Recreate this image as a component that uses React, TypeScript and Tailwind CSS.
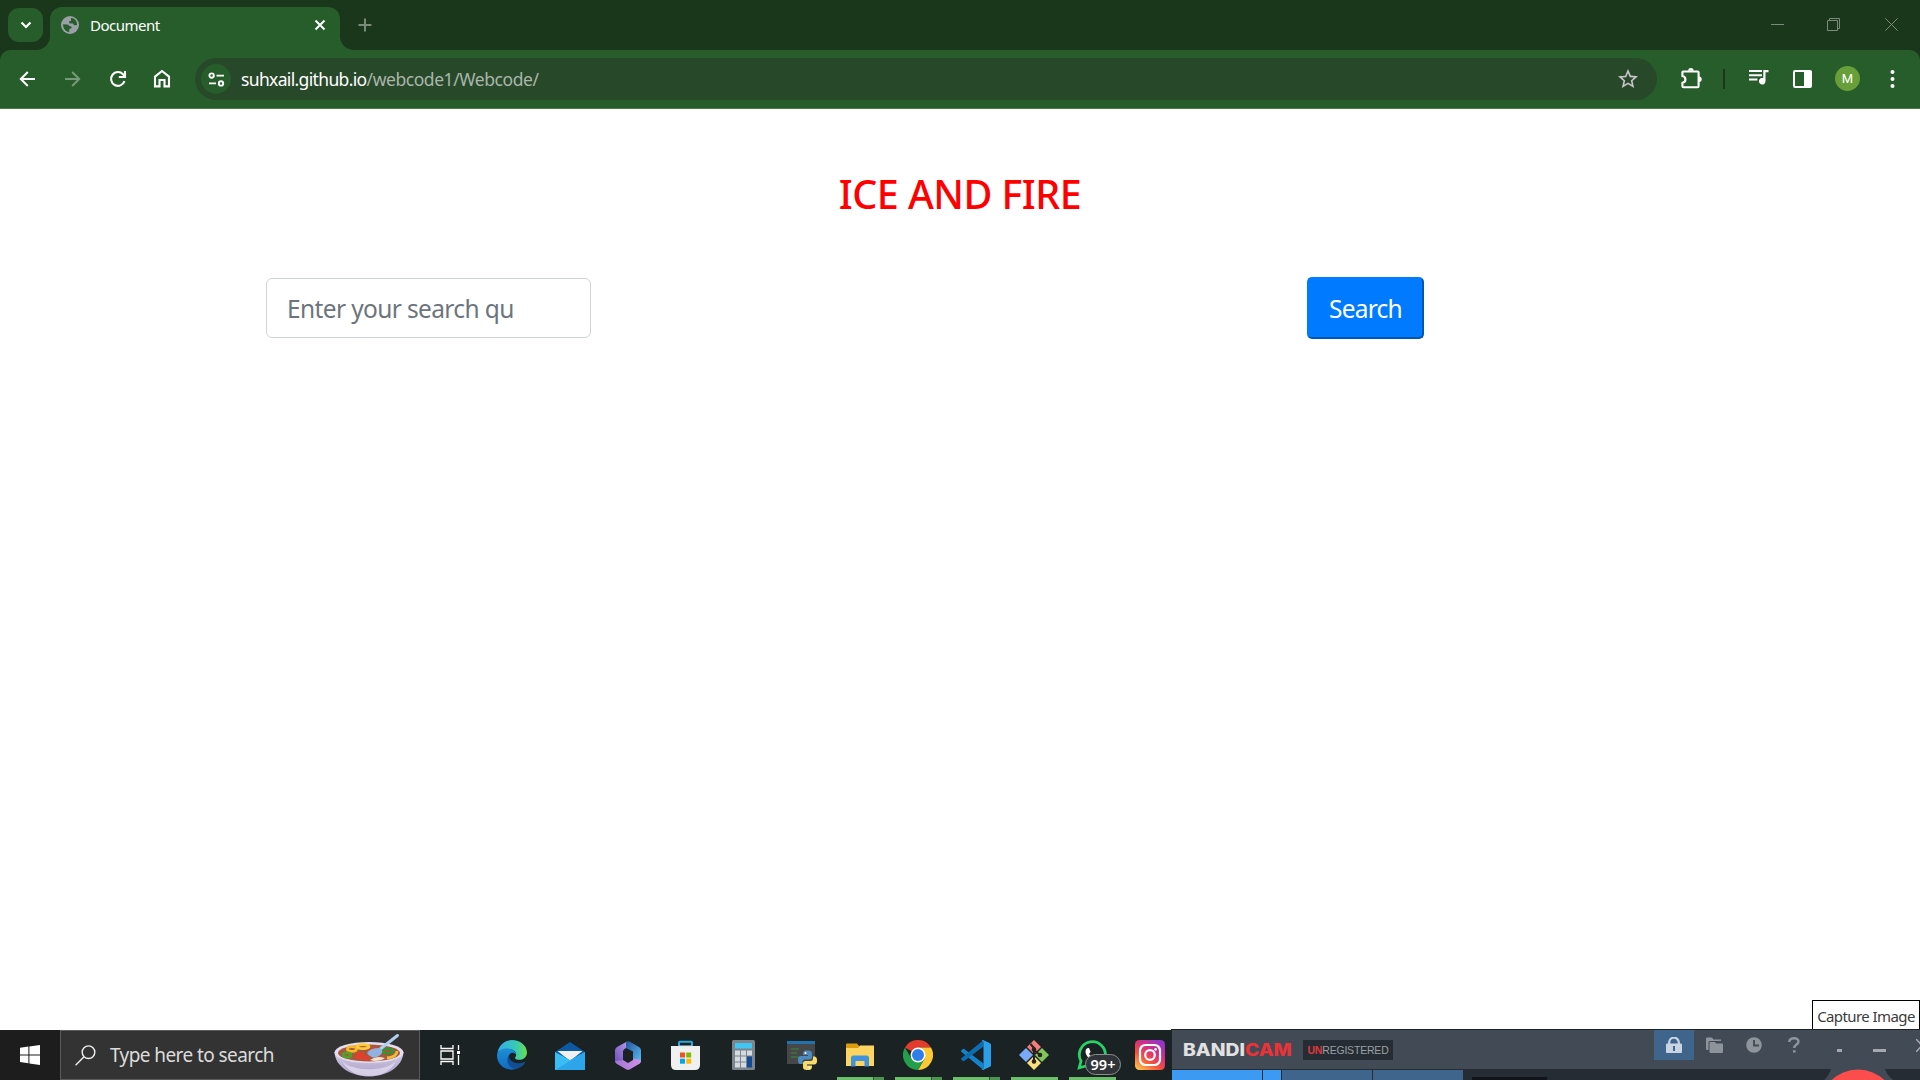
import React from "react";

function Globe() {
  return (
    <svg width="18" height="18" viewBox="0 0 18 18">
      <circle cx="9" cy="9" r="9" fill="#9aa0a6" />
      <path d="M10 2 C14 2 16.3 5.5 16 9 L13.5 9.2 C12.5 9.2 12.7 7.6 11.5 7.4 L8.2 7.2 L8.2 5.2 L10 5 Z" fill="#275d2b" />
      <path d="M2 8.2 L6 8.4 C8 8.6 8 10 9.4 10.2 C11.2 10.4 11 12.4 9.6 12.6 L8.4 13 L8.2 16 C4.5 15.6 2 12.5 2 8.2 Z" fill="#275d2b" />
    </svg>
  );
}

function TabStrip() {
  return (
    <div className="flex h-[50px] items-start bg-[#1b371b]">
      <div className="ml-2 mt-2 flex h-[34px] w-[35px] items-center justify-center rounded-[11px] bg-[#275d2b]">
        <svg width="12" height="8" viewBox="0 0 12 8" fill="none" stroke="#fff" strokeWidth="2.2"><path d="M1.5 1.5 6 6 10.5 1.5" /></svg>
      </div>
      <svg className="-ml-[7px] mt-[36px] shrink-0" width="14" height="14"><path d="M0 14 A14 14 0 0 0 14 0 V14Z" fill="#275d2b" /></svg>
      <div className="mt-[7px] flex h-[43px] w-[290px] items-center rounded-t-[12px] bg-[#275d2b] pl-[11px] pr-[14px] pb-[7px]">
        <Globe />
        <span className="ml-[11px] text-[15px] leading-5 tracking-[-0.5px] text-white">Document</span>
        <svg className="ml-auto" width="12" height="12" viewBox="0 0 12 12" stroke="#fff" strokeWidth="2"><path d="M1.5 1.5 10.5 10.5M10.5 1.5 1.5 10.5" /></svg>
      </div>
      <svg className="mt-[36px] shrink-0" width="14" height="14"><path d="M14 14 A14 14 0 0 1 0 0 V14Z" fill="#275d2b" /></svg>
      <svg className="ml-[4px] mt-[18px]" width="14" height="14" viewBox="0 0 14 14" stroke="#788b76" strokeWidth="2"><path d="M7 .5V13.5M.5 7H13.5" /></svg>
      <div className="ml-auto mr-[22px] mt-[18px] flex">
        <svg width="13" height="13" stroke="#7b8b7a"><path d="M0 6.5H13" /></svg>
        <svg className="ml-[43px]" width="13" height="13" fill="none" stroke="#7b8b7a"><path d="M.5 2.5H10.5V12.5H.5ZM2.5 2.5V.5H12.5V10.5H10.5" /></svg>
        <svg className="ml-[45px]" width="13" height="13" stroke="#7b8b7a"><path d="M.3 .3 12.7 12.7M12.7 .3 .3 12.7" /></svg>
      </div>
    </div>
  );
}

function Toolbar() {
  return (
    <div className="bg-[#1b371b]">
      <div className="flex h-[59px] items-center rounded-t-[10px] border-b border-[#4b7c4e] bg-[#275d2b]">
        <svg className="ml-[19px]" width="17" height="16" viewBox="0 0 17 16" fill="none" stroke="#fff" strokeWidth="2"><path d="M16 8H2M8.8 1 1.8 8 8.8 15" /></svg>
        <svg className="ml-[28px]" width="17" height="16" viewBox="0 0 17 16" fill="none" stroke="#789a79" strokeWidth="2"><path d="M1 8H15M8.2 1 15.2 8 8.2 15" /></svg>
        <svg className="ml-[28px]" width="18" height="18" viewBox="0 0 18 18" fill="none" stroke="#fff" strokeWidth="2.1"><path d="M15.5 11.2 A6.9 6.9 0 1 1 14 4.2 L16 6.2M16 1V7H9.8" /></svg>
        <svg className="-mt-[2px] ml-[26px]" width="18" height="19" viewBox="0 0 18 19" fill="none" stroke="#fff" strokeWidth="2.1"><path d="M2 7.6 9 2 16 7.6V17.4H11.5V11H6.5V17.4H2Z" /></svg>
        <div className="ml-[24px] flex h-[42px] w-[1462px] items-center rounded-full bg-[#28482a] pl-[6px] pr-[17px]">
          <div className="flex h-[30px] w-[30px] items-center justify-center rounded-full bg-[#275d2b]">
            <svg width="17" height="15" viewBox="0 0 17 15" fill="none" stroke="#fff" strokeWidth="1.9"><circle cx="3.6" cy="3.6" r="2.2" /><path d="M8.5 3.6H16M1 11.4H8" /><circle cx="13" cy="11.4" r="2.2" /></svg>
          </div>
          <div className="ml-[10px] text-[17.5px] leading-6 whitespace-nowrap">
            <span className="tracking-[-0.65px] text-white">suhxail.github.io</span><span className="tracking-[-0.43px] text-[#a9b6aa]">/webcode1/Webcode/</span>
          </div>
          <svg className="ml-auto" width="24" height="24" viewBox="0 0 24 24" fill="#c9c6ca"><path d="M22 9.24l-7.19-.62L12 2 9.19 8.63 2 9.24l5.46 4.73L5.82 21 12 17.27 18.18 21l-1.63-7.03L22 9.24zM12 15.4l-3.76 2.27 1-4.28-3.32-2.88 4.38-.38L12 6.1l1.71 4.04 4.38.38-3.32 2.88 1 4.28L12 15.4z" /></svg>
        </div>
        <svg className="-mt-[2px] ml-[23px]" width="23" height="23" viewBox="0 0 23 23" fill="none" stroke="#fff" strokeWidth="2.1"><path d="M3 4.5H17.5Q18.6 4.5 18.6 5.6V19Q18.6 20.2 17.5 20.2H3.6Q2.4 20.2 2.4 19V15.8C6.4 15 6.4 9.8 2.4 9V5.4Q2.4 4.500 3 4.500Z" /><path d="M8.2 3.8a2.7 2.7 0 0 1 5.4 0ZM19 9.5a2.7 2.7 0 0 1 0 5.4Z" fill="#fff" stroke="none" /></svg>
        <div className="ml-[20px] h-[20px] w-[2px] bg-[#1b371b]" />
        <svg className="-mt-[3px] ml-[23px]" width="22" height="17" viewBox="0 0 22 17" fill="#fff"><path d="M1 1H14V3H1ZM1 5.2H14V7.2H1ZM1 9.4H9.4V11.4H1ZM15.3 1H20.5V3.2H17.5V12.2A3.3 3.3 0 1 1 15.3 9.1Z" /></svg>
        <svg className="ml-[23px]" width="19" height="18" viewBox="0 0 19 18"><rect x="1" y="1" width="17" height="16" rx="1" fill="none" stroke="#fff" strokeWidth="2" /><path d="M11 1H18V17H11Z" fill="#fff" /></svg>
        <div className="-mt-px ml-[23px] flex h-[25px] w-[25px] items-center justify-center rounded-full bg-[#689f38] font-[Roboto,sans-serif] text-[13px] text-white">M</div>
        <svg className="ml-[30px]" width="5" height="18" fill="#fff"><circle cx="2.5" cy="2" r="2" /><circle cx="2.5" cy="9" r="2" /><circle cx="2.5" cy="16" r="2" /></svg>
      </div>
    </div>
  );
}

function Bowl() {
  return (
    <svg width="70" height="45" viewBox="0 0 70 45">
      <defs>
        <linearGradient id="bowl" x1="0" x2="0" y1="0" y2="1"><stop offset="0" stopColor="#d3cbe6" /><stop offset="1" stopColor="#aaa0c6" /></linearGradient>
      </defs>
      <path d="M.5 19C1 34 18 43.500 35 43.500S69 34 69.500 19Z" fill="url(#bowl)" />
      <path d="M8 28C16 38 50 40 62 28C56 40 46 43 35 43S14 39 8 28Z" fill="#e9e5f4" opacity=".65" />
      <ellipse cx="35" cy="19.5" rx="34.5" ry="10.5" fill="#e4def3" />
      <ellipse cx="35" cy="20" rx="31" ry="8.500" fill="#a5583b" />
      <g fill="none" strokeWidth="2.800">
        <ellipse cx="18" cy="16" rx="4.500" ry="2.400" stroke="#f5b829" />
        <ellipse cx="29" cy="13.600" rx="6" ry="2" stroke="#ffca38" />
        <ellipse cx="13" cy="22" rx="4" ry="2.200" stroke="#54a02a" />
        <ellipse cx="54" cy="18" rx="5" ry="2.400" stroke="#3d9031" />
        <path d="M53 25Q63 24 63 18" stroke="#f3ba35" />
      </g>
      <path d="M24 19l6 1 2 4-6 3-6-3ZM38 14l6 1-2 4-7-1ZM31 23l5 1-1 4-6-1Z" fill="#e2402d" />
      <path d="M36 27Q42 22 51 25Q48 28 40 28Z" fill="#f5dfca" />
      <path d="M45 17 63.500 2.500" stroke="#b3cef0" strokeWidth="3" strokeLinecap="round" />
      <path d="M33 20Q36 15 46 15Q51 19 45 23Q38 27 33 20Z" fill="#8fb2e0" />
    </svg>
  );
}

function EdgeIcon() {
  return (
    <svg width="30" height="30" viewBox="0 0 30 30">
      <defs>
        <linearGradient id="eg" x1="0" x2="1"><stop offset="0" stopColor="#35a9e8" /><stop offset=".6" stopColor="#35c9b9" /><stop offset="1" stopColor="#6ddc4e" /></linearGradient>
        <linearGradient id="eb" x1="0" x2="0" y1="0" y2="1"><stop offset="0" stopColor="#1b8fd8" /><stop offset="1" stopColor="#126bc0" /></linearGradient>
      </defs>
      <path d="M.5 13C1.500 5 8 0 15 0C23 0 30 5.500 30 12.500C30 17 26.500 19.800 22.500 19.800C18.500 19.800 17.500 18.200 18.300 17.200C21 13.500 17 9 11.500 9C6 9 1.500 11 .5 13Z" fill="url(#eg)" />
      <path d="M0 15C.5 10 5 8.500 10 8.500C15.500 8.500 19 12 19 14.500C16 11 12 13 11.500 17C11 23 16 29 21 28.500C12 32 0 27.500 0 15Z" fill="url(#eb)" />
      <path d="M12 15C7 22 14 31 21.500 28.300C25 27 27 24.500 28 22.800C28.300 22 27.800 21.500 27 22C20 25.500 11.500 21.500 12 15Z" fill="#134e93" />
    </svg>
  );
}

function MailIcon() {
  return (
    <svg width="30" height="29" viewBox="0 0 30 29">
      <path d="M0 11 15 1 30 11V16H0Z" fill="#0c59a4" />
      <path d="M2.500 10H27.500L15 20Z" fill="#f1f1f3" />
      <path d="M0 11 15 19 30 11V29H0Z" fill="#38bdf5" /><path d="M30 11 0 29H30Z" fill="#2ca5ea" />
    </svg>
  );
}

function OfficeIcon() {
  return (
    <svg width="26" height="29" viewBox="0 0 26 29">
      <defs>
        <linearGradient id="o1" x1="0" y1="1" x2="1" y2="0"><stop offset="0" stopColor="#6e50bd" /><stop offset="1" stopColor="#bda0ee" /></linearGradient>
        <linearGradient id="o2" x1="0" y1="0" x2="1" y2="1"><stop offset="0" stopColor="#2553a0" /><stop offset="1" stopColor="#5cc3f2" /></linearGradient>
        <linearGradient id="o3" x1="0" x2="1"><stop offset="0" stopColor="#a175d6" /><stop offset="1" stopColor="#d191e6" /></linearGradient>
      </defs>
      <path d="M12 .5 2 6Q0 7.300 0 9V21L8 19V10.500Q8 9 9.500 8L15 4.500Z" fill="url(#o1)" />
      <path d="M11 1Q13-.5 15 .8L24 6Q26 7.300 26 9V20Q26 22 24 23L18 19V10.500L11 7Z" fill="url(#o2)" />
      <path d="M0 20Q0 22 2 23L11 28.200Q13 29.300 15 28.200L24 23Q26 21.800 26 19L18 17.500V19L13 22 8 19Z" fill="url(#o3)" />
    </svg>
  );
}

function StoreIcon() {
  return (
    <svg width="30" height="30" viewBox="0 0 30 30">
      <path d="M8 8V2.500Q8 1.800 8.800 1.800H20.200Q21 1.800 21 2.500V8" fill="none" stroke="#29a9e0" strokeWidth="2" />
      <path d="M0 6H29V25Q29 30 24 30H5Q0 30 0 25Z" fill="#f0f0f0" />
      <path d="M8 6H21" stroke="#c5e6f4" strokeWidth="1" />
      <path d="M9 12.500H14V17.500H9Z" fill="#f25022" /><path d="M15.200 12.500H20.200V17.500H15.200Z" fill="#7fba00" /><path d="M9 18.700H14V23.700H9Z" fill="#00a4ef" /><path d="M15.200 18.700H20.200V23.700H15.200Z" fill="#ffb900" />
    </svg>
  );
}

function CalcIcon() {
  return (
    <svg width="24" height="30" viewBox="0 0 24 30">
      <rect width="23" height="30" rx="1.500" fill="#7c848c" />
      <path d="M3 3H20V8.500H3Z" fill="#3fc6f5" />
      <path d="M3 10.500H8V15.500H3ZM9 10.500H14V15.500H9ZM15 10.500H20V15.500H15ZM3 16.500H8V21.500H3ZM9 16.500H14V21.500H9ZM3 22.500H8V27.500H3ZM9 22.500H14V27.500H9Z" fill="#d4dae0" />
      <path d="M15 16.500H20V27.500H15Z" fill="#124a95" />
    </svg>
  );
}

function PythonIcon() {
  return (
    <svg width="30" height="30" viewBox="0 0 30 30">
      <path d="M0 1H28V24H0Z" fill="#454748" /><path d="M0 1H28V4H0Z" fill="#2272b0" />
      <path d="M4 9H12M4 13H10M4 17H12" stroke="#3a8a41" strokeWidth="1" />
      <path d="M20 10.500C16 10.500 16 12.500 16 15H21V16H13.500C10 16 10 24 13.500 24H15.500V21.500Q15.500 19.500 17.500 19.500H22.500Q25 19.500 25 17V13.500C25 10.500 22 10.500 20 10.500Z" fill="#4b8bc0" />
      <path d="M21 30C25 30 25 28 25 25.500H20V24.500H27.500C31 24.500 31 16.500 27.500 16.500H26V19Q26 21 23.500 21H18.500Q16 21 16 23.500V27C16 30 19 30 21 30Z" fill="#f8dc6a" />
      <circle cx="18.500" cy="13" r="1" fill="#fff" /><circle cx="22.500" cy="27.500" r="1" fill="#fff" />
    </svg>
  );
}

function ExplorerIcon() {
  return (
    <svg width="28" height="24" viewBox="0 0 28 24">
      <path d="M0 1.500Q0 .5 1 .5H11L13.500 3.500V6H0Z" fill="#dd9a0c" />
      <path d="M0 5H12L14 2.500H28V23H0Z" fill="#fcd462" />
      <path d="M5 23.500V15Q5 12.500 7.500 12.500H20.500Q23 12.500 23 15V23.500H18.500V18H9.500V23.500Z" fill="#3f93dc" />
    </svg>
  );
}

function ChromeIcon() {
  return (
    <svg width="30" height="30" viewBox="0 0 30 30">
      <path d="M15 15 2 7.500A15 15 0 0 1 28 7.500H15Z" fill="#e33b2e" />
      <path d="M15 7.500H28A15 15 0 0 1 15 30L21.500 18.750Z" fill="#fcc934" />
      <path d="M2 7.500A15 15 0 0 0 15 30L21.500 18.750 15 15 8.500 18.750Z" fill="#249e4a" />
      <circle cx="15" cy="15" r="7.500" fill="#fff" /><circle cx="15" cy="15" r="6" fill="#2f7de9" />
    </svg>
  );
}

function CodeIcon() {
  return (
    <svg width="30" height="30" viewBox="0 0 30 30">
      <path d="M.3 11.800Q-.3 11 .5 10.300L2 9Q2.600 8.600 3.200 9L22.500 23.500V30Z" fill="#1583cc" />
      <path d="M.3 18.200Q-.3 19 .5 19.700L2 21Q2.600 21.400 3.200 21L22.500 6.500V0Z" fill="#0e6cb0" />
      <path d="M22 0 29 3.200Q30 3.700 30 4.800V25.200Q30 26.300 29 26.800L22 30Q21 30 20.500 29.300Q22.500 29.600 22.500 27.500V2.500Q22.500 .4 20.500 .7Q21 0 22 0Z" fill="#2ba0ea" />
    </svg>
  );
}

function GitIcon() {
  return (
    <svg width="30" height="30" viewBox="0 0 30 30">
      <path d="M15 0 22 7 15 14 8 7Z" fill="#f27d7c" /><path d="M7 8 14 15 7 22 0 15Z" fill="#7ba9f5" /><path d="M23 8 30 15 23 22 16 15Z" fill="#80c75a" /><path d="M15 16 22 23 15 30 8 23Z" fill="#fbe07e" />
      <path d="M11.500 4 15 8V23M15 10 21 15" fill="none" stroke="#27211f" strokeWidth="2" />
      <circle cx="15" cy="9.500" r="2.300" fill="#27211f" /><circle cx="21" cy="15" r="2.300" fill="#27211f" /><circle cx="15" cy="21.500" r="2.300" fill="#27211f" />
    </svg>
  );
}

function WhatsAppIcon() {
  return (
    <div className="relative h-[30px] w-[30px]">
      <svg width="30" height="30" viewBox="0 0 30 30">
        <path d="M2.200 27.800 4 21A13 13 0 1 1 9 26Z" fill="none" stroke="#25d366" strokeWidth="2.800" />
        <path d="M8.500 11C9 8.500 10.500 7.500 12 8L13.500 11.500Q13.500 12.500 12 14Q14 17 17.500 18.500L19.500 16.500 23 18.500Q22.500 22 19 22C14 21.500 8 15.500 8.500 11Z" fill="#fff" />
      </svg>
      <div className="absolute left-[8px] top-[14px] flex h-[21px] w-[36px] items-center justify-center rounded-full border border-[#8b8e90] bg-[#303438] text-[14.5px] leading-none font-semibold text-white">99+</div>
    </div>
  );
}

function InstagramIcon() {
  return (
    <svg width="30" height="30" viewBox="0 0 30 30">
      <defs>
        <linearGradient id="ig" x1=".15" y1="1" x2=".85" y2="0"><stop offset="0" stopColor="#fdc04d" /><stop offset=".35" stopColor="#f5503c" /><stop offset=".65" stopColor="#cf2f86" /><stop offset="1" stopColor="#8b35d3" /></linearGradient>
      </defs>
      <rect width="30" height="30" rx="4.500" fill="url(#ig)" />
      <g fill="none" stroke="#fff" strokeWidth="2.200"><rect x="5" y="5" width="20" height="20" rx="5.500" /><circle cx="15" cy="15" r="4.800" /></g>
      <circle cx="20.600" cy="9.400" r="1.300" fill="#fff" />
    </svg>
  );
}

function TaskApp({ children, state = "none" }: { children: React.ReactNode; state?: "none" | "single" | "stacked" }) {
  return (
    <div className="flex h-[50px] w-[58px] shrink-0 flex-col items-center">
      <div className="flex h-[47px] items-center pt-[3px]">{children}</div>
      {state !== "none" && (
        <div className="flex h-[3px] w-[47px] bg-[#6cbf6a]">
          {state === "stacked" && <div className="ml-auto w-[11px] border-l border-[#2d5a30] bg-[#4d9450]" />}
        </div>
      )}
    </div>
  );
}

function Taskbar() {
  return (
    <div className="flex h-[50px] bg-[#1a2223]">
      <div className="flex w-[60px] items-center justify-center bg-[#1d1d1d]">
        <svg width="20" height="20" viewBox="0 0 20 20" fill="#fff"><path d="M0 2.800 8.400 1.600V9.400H0ZM9.400 1.500 20 0V9.400H9.400ZM0 10.400H8.400V18.200L0 17ZM9.400 10.400H20V20L9.400 18.500Z" /></svg>
      </div>
      <div className="flex w-[360px] items-center border border-[#5a5a5a] bg-[#333333] pl-[14px] pr-[15px]">
        <svg width="21" height="21" viewBox="0 0 21 21" fill="none" stroke="#f0f0f0" strokeWidth="1.400"><circle cx="13.500" cy="7.200" r="6.300" /><path d="M9 11.800.6 20.200" /></svg>
        <span className="ml-[14px] text-[19px] leading-6 tracking-[-0.58px] whitespace-nowrap text-[#dcdcdc]">Type here to search</span>
        <div className="ml-auto"><Bowl /></div>
      </div>
      <div className="flex w-[63px] items-center justify-center pr-[2px]">
        <svg width="21" height="20" viewBox="0 0 21 20" fill="none" stroke="#fff" strokeWidth="1.300"><path d="M1 0V3.500H13V0M1 20V16.500H13V20M1 6H13V14H1ZM18.500 0V5M18.500 10V20" /><path d="M17 6H20V9H17Z" fill="#fff" stroke="none" /></svg>
      </div>
      <TaskApp><EdgeIcon /></TaskApp>
      <TaskApp><MailIcon /></TaskApp>
      <TaskApp><OfficeIcon /></TaskApp>
      <TaskApp><StoreIcon /></TaskApp>
      <TaskApp><CalcIcon /></TaskApp>
      <TaskApp><PythonIcon /></TaskApp>
      <TaskApp state="stacked"><ExplorerIcon /></TaskApp>
      <TaskApp state="stacked"><ChromeIcon /></TaskApp>
      <TaskApp state="stacked"><CodeIcon /></TaskApp>
      <TaskApp state="single"><GitIcon /></TaskApp>
      <TaskApp state="single"><WhatsAppIcon /></TaskApp>
      <TaskApp><InstagramIcon /></TaskApp>
    </div>
  );
}

function RecorderWindow() {
  return (
    <div className="absolute bottom-0 right-0 flex h-[80px] w-[749px] flex-col items-end">
      <div className="flex h-[29px] w-[108px] shrink-0 items-center justify-center border border-b-0 border-black bg-white pt-[2px] text-[15px] leading-5 tracking-[-0.58px] whitespace-nowrap text-[#3c3c3c]">Capture Image</div>
      <div className="flex h-[51px] w-full flex-col overflow-hidden border-l border-t border-[#1c232b] bg-[#262c34]">
        <div className="flex h-[39px] shrink-0 items-start bg-[#424a56]">
          <div className="ml-[11px] mt-[10px] w-[96px] origin-left scale-x-[1.135] font-[Inter,sans-serif] text-[17px] leading-[21px] font-extrabold whitespace-nowrap text-[#e1e1e2]">BANDI<span className="text-[#ec3237]">CAM</span></div>
          <div className="ml-auto mt-[10px] flex h-[20px] w-[90px] items-center justify-center bg-[#262c33] font-['Liberation_Sans',sans-serif] text-[10.5px] leading-none tracking-[-0.2px] whitespace-nowrap text-[#99a0a6]"><span className="font-bold text-[#e0393d]">UN</span>REGISTERED</div>
          <div className="ml-[261px] flex h-[30px] w-[40px] items-center justify-center bg-[#3f658d]">
            <svg width="16" height="16" viewBox="0 0 16 16"><path d="M3.200 8V5.500a4.800 4.800 0 0 1 9.600 0V8" fill="none" stroke="#c9d4e2" strokeWidth="2.200" /><rect y="6.500" width="16" height="9.500" rx="1" fill="#c9d4e2" /><path d="M7 9H9V14H7Z" fill="#3f658d" /></svg>
          </div>
          <div className="flex h-[30px] w-[40px] items-center justify-center">
            <svg width="17" height="16" viewBox="0 0 17 16" fill="#8d949c"><path d="M0 1.500Q0 .5 1 .5H6L7.500 2.500H15V4H4Q2.500 4 2.500 5.500V13H1Q0 13 0 12Z" /><path d="M3.500 6Q3.500 5 4.500 5H9L10 6.500H16Q17 6.500 17 7.500V15Q17 16 16 16H4.500Q3.500 16 3.500 15Z" /></svg>
          </div>
          <div className="flex h-[30px] w-[40px] items-center justify-center">
            <svg width="16" height="16" viewBox="0 0 16 16"><circle cx="8" cy="8" r="7.800" fill="#8d949c" /><path d="M8 3V8.500H13" fill="none" stroke="#424a56" strokeWidth="1.800" /></svg>
          </div>
          <div className="flex h-[30px] w-[40px] items-center justify-center">
            <svg width="12" height="16" viewBox="0 0 12 16" fill="none" stroke="#8d949c" strokeWidth="2.400"><path d="M1.300 5C1.300 0 10.500 0 10.500 4.500C10.500 7.500 6.500 7.500 6.200 11" /><path d="M5 13.200H7.600V15.600H5Z" fill="#8d949c" stroke="none" /></svg>
          </div>
          <div className="ml-[23px] mt-[19px] h-[3px] w-[5px] bg-[#a5a9af]" />
          <div className="ml-[31px] mt-[19px] h-[3px] w-[13px] bg-[#a5a9af]" />
          <svg className="ml-[30px] mt-[9px]" width="4" height="13" viewBox="0 0 4 13" fill="none" stroke="#a5a9af" strokeWidth="1.500"><path d="M0 0 6 6.500 0 13" /></svg>
        </div>
        <div className="mt-px flex flex-1">
          <div className="w-[90px] bg-[#3d9af3]" />
          <div className="ml-px w-[18px] bg-[#3d9af3]" />
          <div className="ml-px w-[90px] bg-[#40658c]" />
          <div className="ml-px w-[90px] bg-[#40658c]" />
          <div className="ml-[9px] mt-[7px] w-[75px] bg-[#10141a]" />
          <svg className="-mt-px ml-auto mr-[25px]" width="72" height="12" viewBox="0 0 72 12"><path d="M8 0H62Q64 7 72 12H0Q6 7 8 0Z" fill="#424a56" /><circle cx="35" cy="39" r="38.500" fill="#fa4d4c" /></svg>
        </div>
      </div>
    </div>
  );
}

export default function App() {
  return (
    <div className="relative flex h-[1080px] w-[1920px] flex-col overflow-hidden bg-white font-['Noto_Sans',sans-serif]">
      <TabStrip />
      <Toolbar />
      <main className="flex-1">
        <h1 className="mt-[57px] text-center text-[39.5px] leading-[56px] font-medium tracking-[-0.53px] text-[#ff0000]">ICE AND FIRE</h1>
        <div className="mt-[55px] flex items-center justify-between pl-[266px] pr-[496px]">
          <input className="h-[60px] w-[325px] rounded-[6px] border border-[#ced4da] px-[20px] text-[24.5px] tracking-[-0.63px] text-[#495057] placeholder:text-[#6c757d]" placeholder="Enter your search qu" />
          <button className="h-[62px] w-[117px] rounded-[5px] border-2 border-[#007bff] border-r-[#0056b3] border-b-[#0056b3] bg-[#007bff] pt-[2px] text-[24.5px] tracking-[-0.75px] text-white">Search</button>
        </div>
      </main>
      <Taskbar />
      <RecorderWindow />
    </div>
  );
}
